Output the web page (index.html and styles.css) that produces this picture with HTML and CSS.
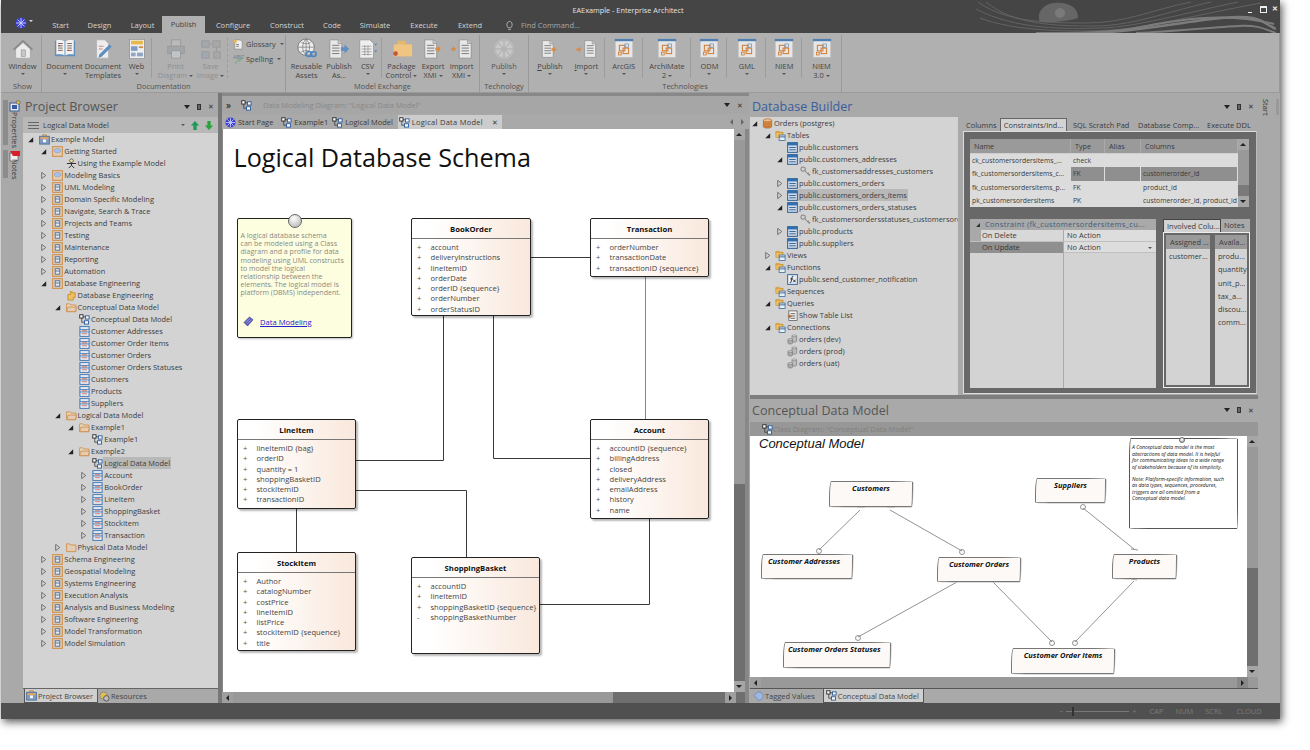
FILE: index.html
```html
<!DOCTYPE html>
<html lang="en">
<head>
<meta charset="utf-8">
<title>EAExample - Enterprise Architect</title>
<link rel="stylesheet" href="styles.css">
</head>
<body>
<svg class="defs" width="0" height="0" aria-hidden="true">
  <symbol id="op" viewBox="0 0 10 10"><path d="M3 1.5 7.5 5 3 8.5Z" fill="none" stroke="#666"/></symbol>
  <symbol id="dn" viewBox="0 0 10 10"><path d="M8 2.5V8H2.5Z" fill="#222"/></symbol>
  <symbol id="pkg" viewBox="0 0 12 12"><rect x=".7" y=".7" width="10.6" height="10.6" fill="#e2cdb4" stroke="#cf9150" stroke-width="1.2"/><rect x="3.5" y="3" width="5" height="6" fill="#e4e9f1" stroke="#4e6f9c"/><path d="M3.5 5.5h5" stroke="#4e6f9c"/></symbol>
  <symbol id="pkgo" viewBox="0 0 12 12"><rect x=".7" y=".7" width="10.6" height="10.6" fill="#e2cdb4" stroke="#cf9150" stroke-width="1.2"/><ellipse cx="6" cy="5" rx="3.6" ry="2.4" fill="#a9c1ea" stroke="#7c98c8" stroke-width=".6"/></symbol>
  <symbol id="model" viewBox="0 0 12 12"><path d="M4 2.5V1h4v1.5" fill="none" stroke="#b0803f"/><rect x=".7" y="2.5" width="10.6" height="8.5" fill="#7f9cc4" stroke="#4e6f9c"/><rect x="1.5" y="3.2" width="9" height="2.5" fill="#d9a566"/><rect x="4.5" y="6" width="3" height="3" fill="#fff"/></symbol>
  <symbol id="fold" viewBox="0 0 12 12"><path d="M.7 10.5V2h3.5l1 1.3h5.6v7.2Z" fill="#ead9c0" stroke="#cf9150"/><path d="M.7 10.5 2.3 5.5h9l-1 5Z" fill="#e2cdb4" stroke="#cf9150"/></symbol>
  <symbol id="foldc" viewBox="0 0 12 12"><path d="M.7 10.5V2h3.5l1 1.3h5.6v7.2Z" fill="#e2cdb4" stroke="#cf9150"/></symbol>
  <symbol id="foldg" viewBox="0 0 12 12"><path d="M2 11V5h3V3h5v5H8v3Z" fill="#f0c060" stroke="#c89030"/><rect x="4" y="1" width="3" height="2" fill="#e0a040"/></symbol>
  <symbol id="diag" viewBox="0 0 12 12"><path d="M3 3h5M3 3v6h3" fill="none" stroke="#333" stroke-width=".8"/><rect x=".8" y=".8" width="3.6" height="3.6" fill="#fff" stroke="#2a2a2a"/><rect x="7" y="2" width="4" height="3.5" fill="#fff" stroke="#2a5a9a"/><rect x="6" y="7.4" width="4.4" height="3.6" fill="#fff" stroke="#2a5a9a"/></symbol>
  <symbol id="cls" viewBox="0 0 12 12"><rect x="1" y=".7" width="10" height="10.6" fill="#f3f6fa" stroke="#3f77b5" stroke-width="1.1"/><path d="M1 3.7h10M1 6.5h10" stroke="#3f77b5"/><path d="M3 5.2h6M3 8.5h6" stroke="#c0392b" stroke-width=".8"/></symbol>
  <symbol id="dbt" viewBox="0 0 12 12"><rect x=".7" y=".7" width="10.6" height="10.6" fill="#cfdaea" stroke="#2f5f95" stroke-width="1.1"/><rect x=".7" y=".7" width="10.6" height="3" fill="#2f6fb0"/><path d="M2.5 6h7M2.5 8.5h7" stroke="#2f5f95"/></symbol>
  <symbol id="fn" viewBox="0 0 12 12"><rect x=".7" y=".7" width="10.6" height="10.6" fill="#e8eef6" stroke="#2f5f95"/><path d="M7 2.5C5.5 2 5.5 3.5 5 6S4.5 10 3 9.5M3.6 5.4h3M6.8 6.2 9.4 9M9.4 6.2 6.8 9" fill="none" stroke="#111" stroke-width=".9"/></symbol>
  <symbol id="key" viewBox="0 0 12 12"><circle cx="3.4" cy="3.4" r="2.4" fill="none" stroke="#888" stroke-width="1.1"/><path d="m5.2 5.2 5.3 5.3M8.4 8.4l1.4-1M9.8 9.8l1.2-1" stroke="#888" stroke-width="1.1" fill="none"/></symbol>
  <symbol id="cyl" viewBox="0 0 12 12"><path d="M1.5 2.5v7c0 2 9 2 9 0v-7Z" fill="#d98b45" stroke="#a85f25" stroke-width=".7"/><ellipse cx="6" cy="2.5" rx="4.5" ry="1.7" fill="#eebe8c" stroke="#a85f25" stroke-width=".7"/><path d="M1.5 5.5c0 1.6 9 1.6 9 0M1.5 8c0 1.6 9 1.6 9 0" fill="none" stroke="#a85f25" stroke-width=".6"/></symbol>
  <symbol id="cyls" viewBox="0 0 12 12"><path d="M5.5 2v6c0 1.2 5 1.2 5 0V2Z" fill="#bbb" stroke="#777" stroke-width=".7"/><ellipse cx="8" cy="2" rx="2.5" ry="1" fill="#ddd" stroke="#777" stroke-width=".6"/><path d="M1 6v4c0 1.2 5 1.2 5 0V6Z" fill="#aaa" stroke="#777" stroke-width=".7"/><ellipse cx="3.5" cy="6" rx="2.5" ry="1" fill="#ccc" stroke="#777" stroke-width=".6"/></symbol>
  <symbol id="qry" viewBox="0 0 12 12"><rect x="2" y="1" width="9" height="10.4" fill="#f4f4f4" stroke="#555" stroke-width=".8"/><path d="M4 4h5M4 6.5h5M4 9h5" stroke="#333" stroke-width=".8"/><path d="M1 7h4M3 5v4" stroke="#c06020" stroke-width="1.2"/></symbol>
  <symbol id="use" viewBox="0 0 12 12"><circle cx="6" cy="3" r="2" fill="#f0e6a0" stroke="#333" stroke-width=".7"/><path d="M1 6h10M6 5v3M6 8l-3 3M6 8l3 3" stroke="#222" fill="none"/></symbol>
  <symbol id="dbf" viewBox="0 0 12 12"><path d="M1 4V1.500h4l1 1h3V4" fill="#f0c060" stroke="#c89030" stroke-width=".7"/><rect x="1" y="3" width="7" height="5" fill="#f0c060" stroke="#c89030" stroke-width=".7"/><rect x="4.500" y="5.500" width="6.500" height="6" fill="#e8eef6" stroke="#2f5f95" stroke-width=".8"/><path d="M4.500 7.500h6.500" stroke="#2f5f95"/></symbol>
  <symbol id="r-tile" viewBox="0 0 24 24"><rect x="2.500" y="3" width="19" height="18" fill="#e6e6e6" stroke="#bdbdbd" stroke-width=".6"/><rect x="2" y="1" width="20" height="2.500" fill="#4f7eb0"/><rect x="7" y="8" width="6" height="6" fill="none" stroke="#d2823c" stroke-width="1.200"/><rect x="11" y="11" width="6" height="6" fill="none" stroke="#d2823c" stroke-width="1.200"/><rect x="13" y="6.500" width="4" height="3.500" fill="none" stroke="#6f8fb5" stroke-width=".8"/><rect x="6" y="15.500" width="3" height="3" fill="none" stroke="#d2823c"/></symbol>
  <symbol id="r-doc" viewBox="0 0 24 24"><path d="M5 2h9l4 4v16H5Z" fill="#e8e8e8" stroke="#888" stroke-width=".8"/><path d="M14 2v4h4" fill="#ccc" stroke="#888" stroke-width=".7"/><path d="M7.500 8h8M7.500 11h8M7.500 14h8M7.500 17h8" stroke="#666" stroke-width=".9"/></symbol>
  <symbol id="r-arrow" viewBox="0 0 24 24"><path d="M1 9.500h5V6l5 6-5 6v-3.500H1Z" fill="#d98a45"/></symbol>
</svg>

<div class="window">
  <header class="head">
    <svg class="swirl" viewBox="0 0 300 33" aria-hidden="true">
      <g fill="none" stroke="#6a6a6a" stroke-width=".8">
        <path d="M2 2C30 22 70 23 110 23S175 10 215 2"/><path d="M10 2C38 25 80 26 118 26S190 12 235 2"/><path d="M0 9C40 30 90 29 125 28S205 14 262 2"/><path d="M4 18C40 32 100 32 135 30S225 14 285 3"/>
      </g>
      <g fill="none" stroke="#7c7c7c">
        <path d="M60 33C110 33 140 32 165 27S245 10 298 24" stroke-width="2"/><path d="M120 33C165 31 205 22 245 18S285 22 300 29" stroke-width="2.400"/><path d="M160 33C200 31 240 27 262 26S288 29 300 33" stroke-width="2"/>
      </g>
      <path d="M64 22C60 12 68 4 78 3 92 1 103 8 102 18 92 21 78 23 64 22Z" fill="#666"/>
      <circle cx="84" cy="13" r="5" fill="#7a7a7a"/>
    </svg>
    <div class="titlerow">
      <span class="apptitle">EAExample - Enterprise Architect</span>
      <div class="winbtns">
        <span class="wmin"></span><span class="wmax"></span><span class="wx">✕</span>
      </div>
    </div>
    <nav class="tabrow">
      <svg class="logo" viewBox="0 0 12 12"><circle cx="6" cy="6" r="5.500" fill="#3a3fd0"/><path d="M6 1v10M1 6h10M2.500 2.500l7 7M9.500 2.500l-7 7" stroke="#cfd2ff" stroke-width=".9"/></svg>
      <i class="caret light"></i>
      <span class="rt t-start">Start</span>
      <span class="rt t-design">Design</span>
      <span class="rt t-layout">Layout</span>
      <span class="rt active t-publish">Publish</span>
      <span class="rt t-conf">Configure</span>
      <span class="rt t-cons">Construct</span>
      <span class="rt t-code">Code</span>
      <span class="rt t-sim">Simulate</span>
      <span class="rt t-exe">Execute</span>
      <span class="rt t-ext">Extend</span>
      <svg class="bulb" viewBox="0 0 10 12"><path d="M3.500 8.500C1 6 2 1.500 5 1.500S9 6 6.500 8.500ZM3.700 10.500h2.600" fill="none" stroke="#bbb"/></svg>
      <span class="find">Find Command...</span>
    </nav>
  </header>

  <section class="ribbon">
    <div class="rg g1">
      <div class="rbtns">
        <div class="rb w37"><svg class="ri" viewBox="0 0 24 24"><path d="M1 12 12 2l11 10-2 1.500L12 5 3 13.500Z" fill="#8a8a8a"/><path d="M4 12 12 5l8 7v10H4Z" fill="#ececec" stroke="#999" stroke-width=".6"/><rect x="10" y="13" width="4.500" height="7" fill="#c8c8c8" stroke="#888" stroke-width=".6"/></svg><span>Window</span><i class="caret"></i></div>
      </div>
      <div class="rl">Show</div>
    </div>
    <div class="rg g2">
      <div class="rbtns">
        <div class="rb w39 ml3"><svg class="ri" viewBox="0 0 24 24"><path d="M1 3h10.500l.5 1 .5-1H23v17H1Z" fill="#5f8fbe"/><path d="M2.500 2.500c3-.5 7-.5 9 1v15.500c-2-1.500-6-1.500-9-1ZM21.500 2.500c-3-.5-7-.5-9 1v15.500c2-1.500 6-1.500 9-1Z" fill="#f2f2f2"/><path d="M4.500 6h5M4.500 8.500h5M4.500 11h5M4.500 13.500h5M14.500 6h5M14.500 8.500h5M14.500 11h5M14.500 13.500h5" stroke="#7a5a50"/><path d="M4.500 8.500h2M14.500 13.500h2" stroke="#c0392b"/></svg><span>Document</span><i class="caret"></i></div>
        <div class="rb w38"><svg class="ri" viewBox="0 0 24 24"><path d="M5 2h9l4 4v16H5Z" fill="#ededed" stroke="#aaa" stroke-width=".7"/><path d="M7.500 9h5M7.500 12h4" stroke="#c77" /><path d="M8 18 19 7l2.500 2.500-11 11-3.500 1Z" fill="#5f8fbe"/></svg><span>Document<br>Templates</span></div>
        <div class="rb w30 sepr"><svg class="ri" viewBox="0 0 24 24"><rect x="4" y="1.500" width="16" height="21" fill="#eee" stroke="#888" stroke-width=".7"/><rect x="5.500" y="3" width="13" height="4" fill="#e8b84a"/><rect x="5.500" y="9" width="7" height="5" fill="#7f9cc4"/><rect x="14" y="9" width="4.500" height="2" fill="#d98a45"/><rect x="5.500" y="16" width="5" height="4" fill="#8da6c8"/><rect x="12" y="16" width="6.500" height="4" fill="#8da6c8"/></svg><span>Web</span><i class="caret"></i></div>
        <div class="rb w37 ml5 dis"><svg class="ri" viewBox="0 0 24 24"><rect x="7" y="2" width="10" height="7" fill="#bbb" stroke="#9a9a9a"/><rect x="3" y="9" width="18" height="8" fill="#a5a5a5" stroke="#999"/><rect x="7" y="14" width="10" height="8" fill="#c0c5cc" stroke="#999"/></svg><span>Print<br>Diagram<i class="caret"></i></span></div>
        <div class="rb w34 sepr dis"><svg class="ri" viewBox="0 0 24 24"><rect x="2" y="3" width="8" height="7" fill="#a2a8b0" stroke="#999"/><rect x="14" y="3" width="8" height="7" fill="#a8a8a8" stroke="#999"/><rect x="2" y="15" width="8" height="7" fill="#a2a8b0" stroke="#999"/><rect x="15" y="15" width="7" height="7" fill="#a8a8a8" stroke="#999"/><path d="M10 6.500h4M18 10v5" stroke="#999"/></svg><span>Save<br>Image<i class="caret"></i></span></div>
        <div class="rstack">
          <div class="rs"><svg class="si" viewBox="0 0 12 12"><path d="M2 1h6l2 2v8H2Z" fill="#eee" stroke="#888" stroke-width=".7"/><path d="M3.500 6h3M3.500 8h3" stroke="#777"/><rect x="1" y="1" width="3" height="3" fill="#e8b84a"/></svg><span>Glossary</span><i class="caret"></i></div>
          <div class="rs"><svg class="si wide" viewBox="0 0 12 12"><path d="M1 11 5 6l1 2 5-7" fill="none" stroke="#6aa86a"/></svg><span class="abc">ABC</span><span>Spelling</span><i class="caret"></i></div>
        </div>
      </div>
      <div class="rl">Documentation</div>
    </div>
    <div class="rg g3">
      <div class="rbtns">
        <div class="rb w35 ml3"><svg class="ri" viewBox="0 0 24 24"><circle cx="11" cy="10" r="9" fill="#eee" stroke="#777"/><path d="M2 10h18M11 1v18M5 4c3 3 9 3 12 0M5 16c3-3 9-3 12 0M11 1c-5 5-5 13 0 18M11 1c5 5 5 13 0 18" fill="none" stroke="#777" stroke-width=".8"/><rect x="11" y="15" width="6" height="5" rx="2.500" fill="none" stroke="#4f86bd" stroke-width="1.800"/><rect x="16" y="15" width="6" height="5" rx="2.500" fill="none" stroke="#4f86bd" stroke-width="1.800"/></svg><span>Reusable<br>Assets</span></div>
        <div class="rb w30"><svg class="ri" viewBox="0 0 24 24"><use href="#r-doc" x="-3" width="24" height="24"/><path d="M14 10h4V7l5 5-5 5v-3h-4Z" fill="#5f8fbe"/></svg><span>Publish<br>As...</span></div>
        <div class="rb w27 sepr"><svg class="ri" viewBox="0 0 24 24"><path d="M3 2h11l4 4v16H3Z" fill="#eee" stroke="#888" stroke-width=".7"/><path d="M5 9h11M5 12h11M5 15h11M5 18h11M8.500 8v11M12 8v11" stroke="#777" stroke-width=".6"/><path d="M19 6h3l-1.500 3ZM19 13h3l-1.500 3Z" fill="#5f8fbe"/></svg><span>CSV</span><i class="caret"></i></div>
        <div class="rb w35 ml2"><svg class="ri" viewBox="0 0 24 24"><path d="M7 3h9v4h7v13H7Z" fill="#e8b86a"/><rect x="3" y="7" width="20" height="13" fill="#efc581"/><circle cx="5" cy="17" r="2.500" fill="#c0563b"/></svg><span>Package<br>Control<i class="caret"></i></span></div>
        <div class="rb w28"><svg class="ri" viewBox="0 0 24 24"><use href="#r-doc" width="24" height="24" x="-2"/><use href="#r-arrow" width="14" height="14" x="14" y="5"/></svg><span>Export<br>XMI<i class="caret"></i></span></div>
        <div class="rb w29"><svg class="ri" viewBox="0 0 24 24"><use href="#r-arrow" width="14" height="14" x="-1" y="5"/><use href="#r-doc" width="24" height="24" x="4"/></svg><span>Import<br>XMI<i class="caret"></i></span></div>
      </div>
      <div class="rl">Model Exchange</div>
    </div>
    <div class="rg g4">
      <div class="rbtns">
        <div class="rb w49 dim"><svg class="ri" viewBox="0 0 24 24"><circle cx="12" cy="12" r="10" fill="#c8c8c8" stroke="#bbb" stroke-width="2"/><path d="M12 2v20M2 12h20M5 5l14 14M19 5 5 19" stroke="#aaa"/><circle cx="12" cy="12" r="3" fill="#b4b4b4"/></svg><span>Publish</span><i class="caret"></i></div>
      </div>
      <div class="rl">Technology</div>
    </div>
    <div class="rg g5">
      <div class="rbtns">
        <div class="rb w36 ml3"><svg class="ri" viewBox="0 0 24 24"><use href="#r-doc" width="22" height="22" x="-1" y="1"/><use href="#r-arrow" width="13" height="13" x="13" y="6"/></svg><span><u>P</u>ublish</span><i class="caret"></i></div>
        <div class="rb w37 sepr"><svg class="ri" viewBox="0 0 24 24"><use href="#r-arrow" width="13" height="13" x="1" y="6"/><use href="#r-doc" width="22" height="22" x="6" y="1"/></svg><span><u>I</u>mport</span><i class="caret"></i></div>
        <div class="rb w38 sepr"><svg class="ri"><use href="#r-tile"/></svg><span>ArcGIS</span><i class="caret"></i></div>
        <div class="rb w49 sepr"><svg class="ri"><use href="#r-tile"/></svg><span>ArchiMate<br>2<i class="caret"></i></span></div>
        <div class="rb w36 sepr"><svg class="ri"><use href="#r-tile"/></svg><span>ODM</span><i class="caret"></i></div>
        <div class="rb w39 sepr"><svg class="ri"><use href="#r-tile"/></svg><span>GML</span><i class="caret"></i></div>
        <div class="rb w36 sepr"><svg class="ri"><use href="#r-tile"/></svg><span>NIEM</span><i class="caret"></i></div>
        <div class="rb w39"><svg class="ri"><use href="#r-tile"/></svg><span>NIEM<br>3.0<i class="caret"></i></span></div>
      </div>
      <div class="rl">Technologies</div>
    </div>
  </section>

  <main class="work">
    <aside class="lstrip">
      <div class="vtab vt-props"><svg class="vi" viewBox="0 0 12 12"><rect x="1" y="3" width="9" height="8" fill="#e6e6e6" stroke="#3a5a9a"/><rect x="3" y="5" width="5" height="4" fill="#3a5aa0"/><path d="M7 1h4v3H8Z" fill="#e8c04a" stroke="#555" stroke-width=".5"/></svg><span>Properties</span></div>
      <div class="vtab vt-notes"><svg class="vi" viewBox="0 0 12 12"><rect x="1" y="3" width="8" height="8" fill="#eee" stroke="#555" stroke-width=".7"/><path d="M1 1h10v5H4Z" fill="#d8202a"/></svg><span>Notes</span></div>
    </aside>

    <section class="pb">
      <div class="ptitle"><h2>Project Browser</h2><div class="pctl"><i class="tri"></i><span class="pin"></span><span class="cx">✕</span></div></div>
      <div class="pbbar">
        <span class="burger"></span><span class="pbname">Logical Data Model</span>
        <i class="caret dark"></i>
        <svg class="arr" viewBox="0 0 12 12"><path d="M6 .5 11 6H8v5.500H4V6H1Z" fill="#1e9a58"/></svg>
        <svg class="arr" viewBox="0 0 12 12"><path d="M6 11.500 11 6H8V.5H4V6H1Z" fill="#2aa23c"/></svg>
      </div>
      <div class="tree ptree">
        <div class="row l0"><svg class="ar"><use href="#dn"/></svg><svg class="ti"><use href="#model"/></svg><span>Example Model</span></div>
        <div class="row l1"><svg class="ar"><use href="#dn"/></svg><svg class="ti"><use href="#pkgo"/></svg><span>Getting Started</span></div>
        <div class="row l2"><i class="ar"></i><svg class="ti"><use href="#use"/></svg><span>Using the Example Model</span></div>
        <div class="row l1"><svg class="ar"><use href="#op"/></svg><svg class="ti"><use href="#pkgo"/></svg><span>Modeling Basics</span></div>
        <div class="row l1"><svg class="ar"><use href="#op"/></svg><svg class="ti"><use href="#pkg"/></svg><span>UML Modeling</span></div>
        <div class="row l1"><svg class="ar"><use href="#op"/></svg><svg class="ti"><use href="#pkg"/></svg><span>Domain Specific Modeling</span></div>
        <div class="row l1"><svg class="ar"><use href="#op"/></svg><svg class="ti"><use href="#pkg"/></svg><span>Navigate, Search &amp; Trace</span></div>
        <div class="row l1"><svg class="ar"><use href="#op"/></svg><svg class="ti"><use href="#pkg"/></svg><span>Projects and Teams</span></div>
        <div class="row l1"><svg class="ar"><use href="#op"/></svg><svg class="ti"><use href="#pkg"/></svg><span>Testing</span></div>
        <div class="row l1"><svg class="ar"><use href="#op"/></svg><svg class="ti"><use href="#pkg"/></svg><span>Maintenance</span></div>
        <div class="row l1"><svg class="ar"><use href="#op"/></svg><svg class="ti"><use href="#pkg"/></svg><span>Reporting</span></div>
        <div class="row l1"><svg class="ar"><use href="#op"/></svg><svg class="ti"><use href="#pkg"/></svg><span>Automation</span></div>
        <div class="row l1"><svg class="ar"><use href="#dn"/></svg><svg class="ti"><use href="#pkg"/></svg><span>Database Engineering</span></div>
        <div class="row l2"><i class="ar"></i><svg class="ti"><use href="#foldg"/></svg><span>Database Engineering</span></div>
        <div class="row l2"><svg class="ar"><use href="#dn"/></svg><svg class="ti"><use href="#fold"/></svg><span>Conceptual Data Model</span></div>
        <div class="row l3"><i class="ar"></i><svg class="ti"><use href="#diag"/></svg><span>Conceptual Data Model</span></div>
        <div class="row l3"><i class="ar"></i><svg class="ti"><use href="#cls"/></svg><span>Customer Addresses</span></div>
        <div class="row l3"><i class="ar"></i><svg class="ti"><use href="#cls"/></svg><span>Customer Order Items</span></div>
        <div class="row l3"><i class="ar"></i><svg class="ti"><use href="#cls"/></svg><span>Customer Orders</span></div>
        <div class="row l3"><i class="ar"></i><svg class="ti"><use href="#cls"/></svg><span>Customer Orders Statuses</span></div>
        <div class="row l3"><i class="ar"></i><svg class="ti"><use href="#cls"/></svg><span>Customers</span></div>
        <div class="row l3"><i class="ar"></i><svg class="ti"><use href="#cls"/></svg><span>Products</span></div>
        <div class="row l3"><i class="ar"></i><svg class="ti"><use href="#cls"/></svg><span>Suppliers</span></div>
        <div class="row l2"><svg class="ar"><use href="#dn"/></svg><svg class="ti"><use href="#fold"/></svg><span>Logical Data Model</span></div>
        <div class="row l3"><svg class="ar"><use href="#dn"/></svg><svg class="ti"><use href="#fold"/></svg><span>Example1</span></div>
        <div class="row l4"><i class="ar"></i><svg class="ti"><use href="#diag"/></svg><span>Example1</span></div>
        <div class="row l3"><svg class="ar"><use href="#dn"/></svg><svg class="ti"><use href="#fold"/></svg><span>Example2</span></div>
        <div class="row l4"><i class="ar"></i><svg class="ti"><use href="#diag"/></svg><span class="sel">Logical Data Model</span></div>
        <div class="row l4"><svg class="ar"><use href="#op"/></svg><svg class="ti"><use href="#cls"/></svg><span>Account</span></div>
        <div class="row l4"><svg class="ar"><use href="#op"/></svg><svg class="ti"><use href="#cls"/></svg><span>BookOrder</span></div>
        <div class="row l4"><svg class="ar"><use href="#op"/></svg><svg class="ti"><use href="#cls"/></svg><span>LineItem</span></div>
        <div class="row l4"><svg class="ar"><use href="#op"/></svg><svg class="ti"><use href="#cls"/></svg><span>ShoppingBasket</span></div>
        <div class="row l4"><svg class="ar"><use href="#op"/></svg><svg class="ti"><use href="#cls"/></svg><span>StockItem</span></div>
        <div class="row l4"><svg class="ar"><use href="#op"/></svg><svg class="ti"><use href="#cls"/></svg><span>Transaction</span></div>
        <div class="row l2"><svg class="ar"><use href="#op"/></svg><svg class="ti"><use href="#foldc"/></svg><span>Physical Data Model</span></div>
        <div class="row l1"><svg class="ar"><use href="#op"/></svg><svg class="ti"><use href="#pkg"/></svg><span>Schema Engineering</span></div>
        <div class="row l1"><svg class="ar"><use href="#op"/></svg><svg class="ti"><use href="#pkg"/></svg><span>Geospatial Modeling</span></div>
        <div class="row l1"><svg class="ar"><use href="#op"/></svg><svg class="ti"><use href="#pkg"/></svg><span>Systems Engineering</span></div>
        <div class="row l1"><svg class="ar"><use href="#op"/></svg><svg class="ti"><use href="#pkg"/></svg><span>Execution Analysis</span></div>
        <div class="row l1"><svg class="ar"><use href="#op"/></svg><svg class="ti"><use href="#pkg"/></svg><span>Analysis and Business Modeling</span></div>
        <div class="row l1"><svg class="ar"><use href="#op"/></svg><svg class="ti"><use href="#pkg"/></svg><span>Software Engineering</span></div>
        <div class="row l1"><svg class="ar"><use href="#op"/></svg><svg class="ti"><use href="#pkg"/></svg><span>Model Transformation</span></div>
        <div class="row l1"><svg class="ar"><use href="#op"/></svg><svg class="ti"><use href="#pkg"/></svg><span>Model Simulation</span></div>
      </div>
      <div class="btabs pbtabs">
        <span class="btab on"><svg class="ti"><use href="#model"/></svg>Project Browser</span>
        <span class="btab"><svg class="ti" viewBox="0 0 12 12"><circle cx="5" cy="5" r="4" fill="#e8c04a" stroke="#888"/><circle cx="8" cy="8" r="3" fill="#bbb" stroke="#555"/></svg>Resources</span>
      </div>
    </section>

    <div class="vsplit"></div>

    <section class="center">
      <div class="crumb">
        <span class="chev">»</span><svg class="ti"><use href="#diag"/></svg>
        <span class="crumbtext">Data Modeling Diagram: "Logical Data Model"</span>
        <div class="pctl"><i class="tri"></i><span class="cx">✕</span></div>
      </div>
      <div class="dtabs">
        <span class="dtab first"><svg class="ti" viewBox="0 0 12 12"><circle cx="6" cy="6" r="5.500" fill="#3a3fd0"/><path d="M6 1v10M1 6h10M2.500 2.500l7 7M9.500 2.500l-7 7" stroke="#cfd2ff" stroke-width=".9"/></svg>Start Page</span>
        <span class="dtab second"><svg class="ti"><use href="#diag"/></svg>Example1</span>
        <span class="dtab"><svg class="ti"><use href="#diag"/></svg>Logical Model</span>
        <span class="dtab on"><svg class="ti"><use href="#diag"/></svg>Logical Data Model<b class="tabx">✕</b></span>
        <span class="tabnav"><i class="tl"></i><i class="tr"></i></span>
      </div>
      <div class="cbody">
        <div class="canvas">
          <h1 class="dtitle">Logical Database Schema</h1>
          <svg class="wires" width="511" height="563" aria-hidden="true">
            <path d="M220.500 187V331.500H133M270.500 187V329.500H367M308 128.500H367M73.500 380V423M133 361.500H243.500V428M317 475.500H426.500V390" fill="none" stroke="#3a3a3a"/>
            <path d="M422.500 148V290" fill="none" stroke="#888"/>
          </svg>
          <div class="note n-note">
            <span class="pinball"></span>
            <p>A logical database schema<br>can be modeled using a Class<br>diagram and a profile for data<br>modeling using UML constructs<br>to model the logical<br>relationship between the<br>elements. The logical model is<br>platform (DBMS) independent.</p>
            <div class="notelink"><svg class="ti" viewBox="0 0 12 12"><path d="M1 7 7 1l4 3-6 7Z" fill="#5a5ab8" stroke="#33338a" stroke-width=".6"/><path d="M3 7 8 2.500M4.500 8.500l5-4.500" stroke="#cfd0ff" stroke-width=".6"/></svg><a>Data Modeling</a></div>
          </div>
          <div class="ent n-book"><h3>BookOrder</h3><ul><li>account</li><li>deliveryInstructions</li><li>lineItemID</li><li>orderDate</li><li>orderID {sequence}</li><li>orderNumber</li><li>orderStatusID</li></ul></div>
          <div class="ent n-trans"><h3>Transaction</h3><ul><li>orderNumber</li><li>transactionDate</li><li>transactionID {sequence}</li></ul></div>
          <div class="ent n-line"><h3>LineItem</h3><ul><li>lineItemID {bag}</li><li>orderID</li><li>quantity = 1</li><li>shoppingBasketID</li><li>stockItemID</li><li>transactionID</li></ul></div>
          <div class="ent n-acct"><h3>Account</h3><ul><li>accountID {sequence}</li><li>billingAddress</li><li>closed</li><li>deliveryAddress</li><li>emailAddress</li><li>history</li><li>name</li></ul></div>
          <div class="ent n-stock"><h3>StockItem</h3><ul><li>Author</li><li>catalogNumber</li><li>costPrice</li><li>lineItemID</li><li>listPrice</li><li>stockItemID {sequence}</li><li>title</li></ul></div>
          <div class="ent n-basket"><h3>ShoppingBasket</h3><ul><li>accountID</li><li>lineItemID</li><li>shoppingBasketID {sequence}</li><li class="minus">shoppingBasketNumber</li></ul></div>
        </div>
        <div class="vscroll vs-c"><i class="up"></i><b class="thumb"></b><i class="down"></i></div>
      </div>
      <div class="hscroll hs-c"><i class="lf"></i><b class="hthumb"></b><i class="rg-a"></i></div>
    </section>

    <section class="rightcol">
      <div class="dbb">
        <div class="ptitle blue"><h2>Database Builder</h2><div class="pctl"><i class="tri"></i><span class="pin"></span><span class="cx">✕</span></div></div>
        <div class="dbbody">
          <div class="tree dbtree">
            <div class="row d0"><svg class="ar"><use href="#dn"/></svg><svg class="ti"><use href="#cyl"/></svg><span>Orders (postgres)</span></div>
            <div class="row d1"><svg class="ar"><use href="#dn"/></svg><svg class="ti"><use href="#dbf"/></svg><span>Tables</span></div>
            <div class="row d2"><i class="ar"></i><svg class="ti"><use href="#dbt"/></svg><span>public.customers</span></div>
            <div class="row d2"><svg class="ar"><use href="#dn"/></svg><svg class="ti"><use href="#dbt"/></svg><span>public.customers_addresses</span></div>
            <div class="row d3"><i class="ar"></i><svg class="ti"><use href="#key"/></svg><span>fk_customersaddresses_customers</span></div>
            <div class="row d2"><svg class="ar"><use href="#op"/></svg><svg class="ti"><use href="#dbt"/></svg><span>public.customers_orders</span></div>
            <div class="row d2"><svg class="ar"><use href="#op"/></svg><svg class="ti"><use href="#dbt"/></svg><span class="sel">public.customers_orders_items</span></div>
            <div class="row d2"><svg class="ar"><use href="#dn"/></svg><svg class="ti"><use href="#dbt"/></svg><span>public.customers_orders_statuses</span></div>
            <div class="row d3"><i class="ar"></i><svg class="ti"><use href="#key"/></svg><span>fk_customersordersstatuses_customersorders</span></div>
            <div class="row d2"><svg class="ar"><use href="#op"/></svg><svg class="ti"><use href="#dbt"/></svg><span>public.products</span></div>
            <div class="row d2"><i class="ar"></i><svg class="ti"><use href="#dbt"/></svg><span>public.suppliers</span></div>
            <div class="row d1"><svg class="ar"><use href="#op"/></svg><svg class="ti"><use href="#dbf"/></svg><span>Views</span></div>
            <div class="row d1"><svg class="ar"><use href="#dn"/></svg><svg class="ti"><use href="#dbf"/></svg><span>Functions</span></div>
            <div class="row d2"><i class="ar"></i><svg class="ti"><use href="#fn"/></svg><span>public.send_customer_notification</span></div>
            <div class="row d1"><i class="ar"></i><svg class="ti"><use href="#dbf"/></svg><span>Sequences</span></div>
            <div class="row d1"><svg class="ar"><use href="#dn"/></svg><svg class="ti"><use href="#dbf"/></svg><span>Queries</span></div>
            <div class="row d2"><i class="ar"></i><svg class="ti"><use href="#qry"/></svg><span>Show Table List</span></div>
            <div class="row d1"><svg class="ar"><use href="#dn"/></svg><svg class="ti"><use href="#dbf"/></svg><span>Connections</span></div>
            <div class="row d2"><i class="ar"></i><svg class="ti"><use href="#cyls"/></svg><span>orders (dev)</span></div>
            <div class="row d2"><i class="ar"></i><svg class="ti"><use href="#cyls"/></svg><span>orders (prod)</span></div>
            <div class="row d2"><i class="ar"></i><svg class="ti"><use href="#cyls"/></svg><span>orders (uat)</span></div>
          </div>
          <div class="grip"></div>
          <div class="dbright">
            <div class="dbtabs">
              <span class="dbt t1">Columns</span><span class="dbt on t2">Constraints/Ind...</span><span class="dbt t3">SQL Scratch Pad</span><span class="dbt t4">Database Comp...</span><span class="dbt t5">Execute DDL</span>
            </div>
            <div class="dbdark">
              <div class="cgrid">
                <div class="cmain">
                  <div class="cr head"><span>Name</span><span>Type</span><span>Alias</span><span>Columns</span></div>
                  <div class="cr"><span>ck_customersordersitems_...</span><span>check</span><span></span><span></span></div>
                  <div class="cr sel"><span>fk_customersordersitems_c...</span><span>FK</span><span></span><span>customerorder_id</span></div>
                  <div class="cr"><span>fk_customersordersitems_p...</span><span>FK</span><span></span><span>product_id</span></div>
                  <div class="cr"><span>pk_customersordersitems</span><span>PK</span><span></span><span>customerorder_id, product_id</span></div>
                </div>
                <div class="vscroll vs-g"><i class="up"></i><b class="thumb"></b><i class="down"></i></div>
              </div>
              <div class="clower">
                <div class="props">
                  <div class="phead"><i class="mini"></i>Constraint (fk_customersordersitems_cu...</div>
                  <div class="prow"><span>On Delete</span><span>No Action</span></div>
                  <div class="prow on"><span>On Update</span><span>No Action<i class="caret dark"></i></span></div>
                  <div class="pfill"><span></span><span></span></div>
                </div>
                <div class="inv">
                  <div class="invtabs"><span class="on">Involved Colu...</span><span>Notes</span></div>
                  <div class="invbox">
                    <div class="invcol c-a"><h4>Assigned ...</h4><p>customer...</p></div>
                    <div class="invgrip"></div>
                    <div class="invcol c-b"><h4>Availa...</h4><p>produ...</p><p>quantity</p><p>unit_p...</p><p>tax_a...</p><p>discou...</p><p>comm...</p></div>
                  </div>
                </div>
              </div>
            </div>
          </div>
        </div>
      </div>
      <div class="hsplit"></div>
      <div class="cdm">
        <div class="ptitle"><h2>Conceptual Data Model</h2><div class="pctl"><i class="tri"></i><span class="pin"></span><span class="cx">✕</span></div></div>
        <div class="cdmcrumb"><svg class="ti"><use href="#diag"/></svg><span>Class Diagram: "Conceptual Data Model"</span></div>
        <div class="cbody2">
          <div class="canvas2">
            <h2 class="c2title">Conceptual Model</h2>
            <svg class="wires" width="498" height="241" aria-hidden="true">
              <g fill="none" stroke="#777" stroke-width=".8">
                <path d="M110 74 69 114M140 74 212 115M207 146 108 201M243 146 302 206M384 145 325 206M333 72 384 113"/>
                <path d="M107 71h8M137 71h8M204 143h8M240 143h8M381 143l6 1M381 113l7 1"/>
                <circle cx="69" cy="115" r="2.500"/><circle cx="212" cy="116" r="2.500"/><circle cx="108" cy="202" r="2.500"/><circle cx="302" cy="207" r="2.500"/><circle cx="325" cy="207" r="2.500"/><circle cx="333" cy="71" r="2.500"/>
              </g>
            </svg>
            <div class="hbox b-cust">Customers</div>
            <div class="hbox b-addr">Customer Addresses</div>
            <div class="hbox b-ord">Customer Orders</div>
            <div class="hbox b-stat">Customer Orders Statuses</div>
            <div class="hbox b-items">Customer Order Items</div>
            <div class="hbox b-sup">Suppliers</div>
            <div class="hbox b-prod">Products</div>
            <div class="hnote"><span class="pinball small"></span><p>A Conceptual data model is the most<br>abstractions of data model. It is helpful<br>for communicating ideas to a wide range<br>of stakeholders because of its simplicity.</p><p>Note: Platform-specific information, such<br>as data types, sequences, procedures,<br>triggers are all omitted from a<br>Conceptual data model.</p></div>
          </div>
          <div class="vscroll vs-l"><i class="up"></i><b class="thumb"></b><i class="down"></i></div>
        </div>
        <div class="hscroll hs-l"><i class="lf"></i><b class="hthumb"></b><i class="rg-a"></i></div>
        <div class="btabs cdmtabs">
          <span class="btab"><svg class="ti" viewBox="0 0 12 12"><path d="M1 5 5 1h3l3 3v3l-4 4Z" fill="#9db7e0" stroke="#5a7ab0" stroke-width=".7"/></svg>Tagged Values</span>
          <span class="btab on"><svg class="ti"><use href="#diag"/></svg>Conceptual Data Model</span>
        </div>
      </div>
    </section>

    <aside class="rstrip"><span class="starttab">Start</span></aside>
  </main>

  <footer class="status">
    <span class="zoomm">−</span><span class="slider"><b></b></span><span class="zoomp">+</span>
    <span class="st s1">CAP</span><span class="st s2">NUM</span><span class="st s3">SCRL</span><span class="st s4">CLOUD</span>
  </footer>
</div>
</body>
</html>
```

FILE: styles.css
```css
* { box-sizing: border-box; }
html, body { margin: 0; padding: 0; background: #fff; }
body { font-family: "Open Sans", "Noto Sans", sans-serif; font-size: 7.45px; color: #3a3a3a; overflow: hidden; width: 1310px; height: 750px; }
.defs { position: absolute; }
.window { width: 1279px; height: 719px; margin-left: 1px; display: flex; flex-direction: column; background: #a9a9a9; box-shadow: 2px 3px 8px rgba(0,0,0,.65); overflow: hidden; }

/* header */
.head { position: relative; height: 33px; background: #454545; color: #d8d8d8; flex: none; }
.swirl { position: absolute; right: 4px; top: 0; width: 300px; height: 33px; }
.titlerow { position: relative; height: 17px; display: flex; align-items: center; justify-content: center; padding-right: 25px; }
.apptitle { font-size: 7.3px; color: #e4e4e4; position: relative; top: 1px; }
.winbtns { position: absolute; right: 2px; top: 4px; display: flex; align-items: center; gap: 5px; height: 10px; }
.wmin { width: 4px; height: 1.5px; background: #eee; margin-top: 7px; margin-right: 3px; }
.wmax { width: 7px; height: 7px; border: 1px solid #eee; border-top-width: 2px; }
.wx { font-size: 7px; color: #eee; font-weight: 700; line-height: 10px; }
.tabrow { position: relative; height: 16px; display: flex; align-items: center; padding-left: 14px; }
.logo { width: 12px; height: 12px; margin-top: -5px; }
.caret { display: inline-block; width: 0; height: 0; border: 2px solid transparent; border-top: 2.5px solid #555; border-bottom: 0; vertical-align: middle; margin-left: 2px; }
.caret.light { border-top-color: #ddd; margin-top: -8px; }
.rt { display: block; font-size: 7.5px; text-align: center; line-height: 16px; color: #d4d4d4; }
.t-start { margin-left: 12px; width: 31px; } .t-design { width: 47px; } .t-layout { width: 39px; }
.rt.active { width: 43px; margin-left: 0; background: #b0b0b0; color: #444; height: 17px; margin-top: -1px; }
.t-conf { width: 56px; } .t-cons { width: 52px; } .t-code { width: 38px; } .t-sim { width: 48px; } .t-exe { width: 50px; } .t-ext { width: 42px; }
.bulb { width: 9px; height: 11px; margin-left: 14px; }
.find { margin-left: 7px; color: #a8a8a8; }

/* ribbon */
.ribbon { flex: none; height: 60px; background: #b0b0b0; display: flex; padding-left: 3px; border-bottom: 1px solid #9a9a9a; border-right: 1px solid #999; }
.rg { display: flex; flex-direction: column; border-right: 1px solid #999; margin-top: 2px; }
.g1 { width: 38px; } .g2 { width: 244px; } .g3 { width: 194px; } .g4 { width: 49px; } .g5 { width: 313px; }
.rbtns { display: flex; height: 46px; }
.rb { display: block; text-align: center; line-height: 9px; color: #444; padding-top: 3px; }
.rb span { display: block; }
.ri { display: block; width: 22px; height: 22px; margin: 0 auto 2px; }
.rb .caret { display: block; margin: 2px auto 0; }
.rb span .caret { display: inline-block; margin: 0 0 0 2px; }
.w27 { width: 28px; } .w28 { width: 28px; } .w29 { width: 29px; } .w30 { width: 30px; } .w34 { width: 34px; } .w35 { width: 35px; } .w36 { width: 36px; } .w37 { width: 37px; } .w38 { width: 38px; } .w39 { width: 39px; } .w40 { width: 40px; } .w49 { width: 49px; }
.ml2 { margin-left: 2px; } .ml3 { margin-left: 3px; } .ml4 { margin-left: 4px; } .ml5 { margin-left: 5px; }
.sepr { border-right: 1px solid #9c9c9c; height: 40px; margin-top: 3px; padding-top: 0; }
.g5 .sepr { padding-left: 1px; }
.dis { color: #8e8e8e; }
.dis.sepr { border-right: 1px dashed #9c9c9c; }
.dim { color: #555; }
.rstack { margin-left: 5px; padding-top: 3px; display: flex; flex-direction: column; gap: 3px; }
.rs { display: flex; align-items: center; height: 12px; color: #444; gap: 2px; position: relative; }
.si { width: 11px; height: 11px; }
.si.wide { position: absolute; left: 1px; top: 1px; }
.abc { font-size: 6px; color: #6a7f9a; width: 11px; position: relative; top: -2px; letter-spacing: -.4px; }
.rl { height: 11px; line-height: 11px; text-align: center; color: #505050; margin-top: 0; }

/* workspace */
.work { flex: 1; min-height: 0; display: flex; background: #a9a9a9; }
.lstrip { width: 22px; flex: none; background: #a9a9a9; padding: 7px 0 0 2px; display: flex; flex-direction: column; gap: 5px; }
.vtab { width: 5px; background: #8c8c8c; position: relative; }
.vt-props { height: 45px; } .vt-notes { height: 28px; }
.vi { position: absolute; left: 6px; top: 0; width: 12px; height: 12px; }
.vtab span { position: absolute; left: 7px; top: 12px; writing-mode: vertical-rl; color: #333; font-size: 7.45px; line-height: 10px; }
.vt-notes span { top: 9px; }

.pb { width: 195px; flex: none; display: flex; flex-direction: column; }
.ptitle { height: 24px; flex: none; display: flex; align-items: center; justify-content: space-between; padding: 3px 4px 0 2px; }
.ptitle h2 { margin: 0; font-size: 12.55px; font-weight: 400; color: #555; line-height: 15px; }
.ptitle.blue h2 { color: #3a5e9e; }
.pctl { display: flex; align-items: center; gap: 7px; color: #333; }
.tri { width: 0; height: 0; border: 3px solid transparent; border-top: 4px solid #222; border-bottom: 0; }
.pin { width: 4px; height: 6px; background: #666; border: 1px solid #333; }
.cx { font-size: 7px; line-height: 9px; color: #333; }
.pbbar { height: 16px; flex: none; background: #b8b8b8; display: flex; align-items: center; padding-left: 5px; }
.burger { width: 11px; height: 7px; border-top: 1px solid #666; border-bottom: 1px solid #666; position: relative; }
.burger::after { content: ""; position: absolute; left: 0; right: 0; top: 2px; height: 1px; background: #666; }
.pbname { margin-left: 4px; flex: 1; }
.arr { width: 10px; height: 11px; margin-right: 4px; }
.pbbar .caret { margin-right: 5px; }
.tree { background: #d3d3d3; overflow: hidden; }
.ptree { flex: 1; padding-top: 0; }
.row { height: 12px; display: flex; align-items: center; white-space: nowrap; color: #3c3c3c; }
.ar { width: 9px; height: 9px; display: block; flex: none; margin-right: 4px; }
.ti { width: 11px; height: 11px; flex: none; display: block; margin-right: 1px; }
.row span { padding: 0 1px; margin-left: -1px; line-height: 12px; }
.row .sel { background: #b8b8b8; }
.l0 { padding-left: 3px; } .l1 { padding-left: 16.3px; } .l2 { padding-left: 29.6px; } .l3 { padding-left: 43px; } .l4 { padding-left: 56.3px; }
.btabs { height: 15px; flex: none; display: flex; background: #a9a9a9; border-top: 1px solid #666; padding-left: 1px; }
.btab { display: flex; align-items: center; gap: 1px; padding: 0 4px 0 1px; height: 14px; color: #444; }
.btab .ti { margin-right: 0; }
.btab.on { background: #cfcfcf; border: 1px solid #555; border-top: 0; }

.vsplit { width: 4px; flex: none; background: #777; }
.center { width: 527px; flex: none; display: flex; flex-direction: column; background: #888; padding-top: 2px; }
.crumb { height: 19px; flex: none; display: flex; align-items: center; padding: 0 6px 0 4px; background: #a6a6a6; border-top: 1px solid #888; }
.chev { font-size: 10px; color: #111; width: 15px; line-height: 10px; }
.crumbtext { margin-left: 10px; color: #888; flex: 1; }
.dtabs { height: 15px; flex: none; display: flex; align-items: flex-end; background: #a9a9a9; padding-left: 2px; position: relative; }
.dtab { display: flex; align-items: center; gap: 1px; height: 14px; padding: 0 3px 0 1px; color: #3a3a3a; margin-right: 1px; }
.dtab.first { margin-right: 4px; }
.dtab.second { margin-right: 0; }
.dtab.on { background: #ccc; margin-left: 1px; letter-spacing: .3px; padding-right: 4px; }
.tabx { font-weight: 400; font-size: 7px; margin-left: 8px; }
.tabnav { position: absolute; right: 5px; top: 5px; display: flex; gap: 8px; }
.tl, .tr { width: 0; height: 0; border: 3px solid transparent; }
.tl { border-right: 3px solid #666; border-left: 0; }
.tr { border-left: 3px solid #666; border-right: 0; }
.cbody { flex: 1; min-height: 0; display: flex; padding-left: 1px; background: #888; }
.canvas { position: relative; width: 511px; background: #fff; overflow: hidden; }
.dtitle { position: absolute; left: 10.5px; top: 13px; margin: 0; font-size: 25.2px; font-weight: 400; color: #111; line-height: 30px; white-space: nowrap; }
.wires { position: absolute; left: 0; top: 0; }
.ent { position: absolute; border: 1px solid #222; border-radius: 2px; background: linear-gradient(90deg, #fff 15%, #f9e8dc); box-shadow: 2px 2px 2px rgba(0,0,0,.28); }
.ent h3 { margin: 0; height: 20px; line-height: 21px; font-size: 7.7px; font-weight: 700; text-align: center; color: #111; border-bottom: 1px solid #777; }
.ent ul { list-style: none; margin: 0; padding: 3px 0 0 18.5px; }
.ent li { position: relative; height: 10.3px; line-height: 10.3px; font-size: 7.6px; color: #444; white-space: nowrap; }
.ent li::before { content: "+"; position: absolute; left: -13.5px; color: #555; }
.ent li.minus::before { content: "-"; }
.n-book { left: 188px; top: 89px; width: 120px; height: 98px; }
.n-trans { left: 367px; top: 89px; width: 119px; height: 59px; }
.n-line { left: 14px; top: 290px; width: 119px; height: 90px; }
.n-acct { left: 367px; top: 290px; width: 119px; height: 100px; }
.n-stock { left: 14px; top: 423px; width: 119px; height: 99px; }
.n-basket { left: 188px; top: 428px; width: 129px; height: 97px; }
.note { position: absolute; left: 14px; top: 89px; width: 115px; height: 120px; border: 1px solid #222; border-radius: 2px; background: #fdfde0; box-shadow: 1px 1px 2px rgba(0,0,0,.25); padding: 12px 2px 0 2.5px; }
.note p { margin: 0; font-size: 7.05px; line-height: 8.2px; color: #8a8a80; white-space: nowrap; }
.pinball { position: absolute; left: 50px; top: -5px; width: 14px; height: 14px; border-radius: 50%; border: 1px solid #666; background: radial-gradient(circle at 40% 30%, #fff, #c4c4c4 70%); }
.pinball.small { width: 6px; height: 6px; left: 49px; top: -2px; }
.notelink { position: absolute; left: 5px; bottom: 10px; display: flex; align-items: center; gap: 6px; }
.notelink .ti { margin: 0; }
.notelink a { color: #2222cc; text-decoration: underline; font-size: 7.6px; }

.vscroll { width: 11px; flex: none; background: #6f6f6f; display: flex; flex-direction: column; position: relative; }
.vscroll .thumb { display: block; background: #999; }
.vscroll i { height: 11px; flex: none; background: #a6a6a6; position: relative; display: block; }
.vscroll i::after { content: ""; position: absolute; left: 2px; top: 4px; border: 3px solid transparent; }
.up::after { border-bottom: 3px solid #222 !important; border-top: 0 !important; }
.down::after { border-top: 3px solid #222 !important; border-bottom: 0 !important; }
.vscroll .down { margin-top: auto; }
.vs-c .thumb { height: 344px; }
.vs-l .thumb { height: 121px; }
.hscroll { height: 11px; flex: none; display: flex; background: #6f6f6f; }
.hscroll i { width: 11px; flex: none; background: #9f9f9f; position: relative; display: block; }
.hscroll i::after { content: ""; position: absolute; top: 2.5px; left: 4px; border: 3px solid transparent; }
.lf::after { border-right: 3px solid #222 !important; border-left: 0 !important; }
.rg-a::after { border-left: 3px solid #222 !important; border-right: 0 !important; }
.hthumb { display: block; background: #999; }
.hs-c { margin-right: 4px; }
.hs-c .hthumb { width: 380px; }
.hs-c .rg-a { margin-left: auto; margin-right: 9px; }

.rightcol { width: 509px; flex: none; display: flex; flex-direction: column; background: #a9a9a9; padding-left: 1px; }
.dbb { height: 302px; flex: none; display: flex; flex-direction: column; }
.dbbody { flex: 1; min-height: 0; display: flex; }
.dbtree { width: 208px; flex: none; padding-top: 0; }
.d0 { padding-left: 0; } .d1 { padding-left: 13px; } .d2 { padding-left: 25px; } .d3 { padding-left: 38px; }
.dbtree .ar { margin-right: 3px; }
.grip { width: 5px; flex: none; }
.dbright { flex: 1; display: flex; flex-direction: column; min-width: 0; padding-right: 1px; }
.dbtabs { height: 14px; flex: none; display: flex; align-items: flex-end; position: relative; }
.dbt { line-height: 12px; color: #3a3a3a; white-space: nowrap; }
.t1 { margin-left: 3px; width: 34px; } .t2 { width: 67px; } .t3 { margin-left: 6px; width: 65px; } .t4 { width: 69px; } .t5 { width: 46px; }
.dbt.on { background: #d3d3d3; border: 1px solid #666; border-bottom: 0; text-align: center; height: 13px; }
.dbdark { flex: 1; min-height: 0; background: #686868; border: 1px solid #ddd; border-right-color: #bbb; padding: 7px 7px 5px 6px; display: flex; flex-direction: column; margin-bottom: 1px; }
.cgrid { height: 68px; flex: none; display: flex; background: #cfcfcf; }
.cmain { flex: 1; min-width: 0; }
.cr { display: grid; grid-template-columns: 101px 34px 36px 97px; height: 13.25px; line-height: 13.25px; background: #dcdcdc; white-space: nowrap; overflow: hidden; font-size: 6.8px; }
.cr span { padding-left: 2px; overflow: hidden; color: #3a3a3a; }
.cr.head { height: 14px; line-height: 14px; background: #9a9a9a; margin-bottom: 1px; font-size: 7.2px; }
.cr.head span { padding-left: 4px; border-right: 1px solid #aaa; }
.cr.sel span { background: #8f8f8f; border-right: 1px solid #ddd; }
.cr.sel span:first-child { background: #dcdcdc; }
.vs-g { width: 11px; background: #7a7a7a; }
.vs-g .thumb { height: 35px; }
.vs-g i { height: 11px; }
.clower { flex: 1; min-height: 0; display: flex; justify-content: space-between; margin-top: 12px; }
.props { width: 186px; background: #d3d3d3; display: flex; flex-direction: column; }
.phead { height: 11px; line-height: 11px; background: #a9a9a9; color: #3f5a7a; letter-spacing: .35px; padding-left: 6px; white-space: nowrap; overflow: hidden; }
.mini { display: inline-block; border: 2px solid transparent; border-right: 2px solid #333; border-bottom: 2px solid #333; margin-right: 5px; }
.prow { height: 11.5px; line-height: 11px; display: grid; grid-template-columns: 94px 92px; background: #ddd; border-bottom: 1px solid #c0c0c0; }
.prow span:first-child { padding-left: 12px; border-right: 1px solid #aaa; background: linear-gradient(90deg, #a9a9a9 11px, #d8d8d8 11px); }
.prow span + span { padding-left: 3px; position: relative; }
.prow.on span:first-child { background: #8f8f8f; }
.prow .caret { position: absolute; right: 4px; top: 5px; }
.pfill { flex: 1; display: grid; grid-template-columns: 94px 92px; }
.pfill span:first-child { border-right: 1px solid #aaa; }
.inv { width: 87px; display: flex; flex-direction: column; margin-right: -1px; }
.invtabs { height: 13px; flex: none; display: flex; }
.invtabs span { line-height: 12px; background: #a9a9a9; padding: 0 3px; width: 29px; }
.invtabs .on { width: 58px; background: #d3d3d3; border: 1px solid #444; border-bottom: 0; white-space: nowrap; padding: 0 0 0 3px; }
.invbox { flex: 1; border: 1px solid #eee; background: #686868; display: flex; padding: 2px; }
.invcol { background: #d3d3d3; min-width: 0; }
.invcol h4 { margin: 0; height: 14px; line-height: 14px; background: #9a9a9a; font-weight: 400; padding-left: 4px; white-space: nowrap; }
.invcol p { margin: 0; height: 13.300px; line-height: 13.300px; padding-left: 3px; white-space: nowrap; }
.c-a { width: 44px; padding-top: 0; } .c-a p { margin-top: 1px; padding-left: 3px; }
.c-b { flex: 1; margin-left: 0; } .c-b p:first-of-type { margin-top: 1px; }
.invgrip { width: 5px; background: #686868; }

.hsplit { height: 4px; flex: none; background: #7e7e7e; }
.cdm { flex: 1; min-height: 0; display: flex; flex-direction: column; }
.cdm .ptitle { height: 23px; padding: 0 4px 1px 2px; }
.cdmcrumb { height: 14px; flex: none; background: #979797; display: flex; align-items: center; padding-left: 12px; color: #808080; }
.cdmcrumb .ti { margin-right: 0; }
.cbody2 { height: 241px; flex: none; display: flex; margin-top: 0; }
.canvas2 { position: relative; width: 498px; background: #fff; overflow: hidden; }
.c2title { position: absolute; left: 9px; top: 0; margin: 0; font: italic 400 13px/15px "Liberation Sans", sans-serif; color: #111; }
.hbox { position: absolute; background: #fdf9f6; border: 1px solid #777; border-radius: 3px 40px 2px 30px / 20px 1px 30px 1px; box-shadow: .5px .5px 0 #bbb; font: italic 700 7.5px/10px "Open Sans", sans-serif; color: #111; white-space: nowrap; padding-top: 1px; }
.b-cust { left: 79px; top: 45px; width: 84px; height: 26px; text-align: center; }
.b-addr { left: 11px; top: 118px; width: 92px; height: 25px; padding-left: 6px; }
.b-ord { left: 187px; top: 121px; width: 84px; height: 25px; text-align: center; }
.b-stat { left: 33px; top: 206px; width: 108px; height: 26px; padding-left: 4px; }
.b-items { left: 261px; top: 212px; width: 104px; height: 26px; text-align: center; }
.b-sup { left: 285px; top: 42px; width: 71px; height: 25px; text-align: center; }
.b-prod { left: 362px; top: 118px; width: 65px; height: 25px; text-align: center; }
.hnote { position: absolute; left: 379px; top: 2px; width: 109px; height: 91px; background: #fff; border: 1px solid #555; border-radius: 2px 40px 1px 30px / 20px 1px 30px 1px; padding: 5px 0 0 2px; font: italic 400 5.100px/6.500px "Open Sans", sans-serif; color: #111; white-space: nowrap; }
.hnote p { margin: 0 0 5.500px; }
.cbody2 .vscroll { width: 11px; }
.hs-l { width: 509px; background: #999; }
.hs-l .hthumb { flex: 1; }
.hs-l .rg-a { margin-right: 11px; background: #888; }
.cdmtabs { padding-left: 2px; border-top: 1px solid #555; }
.cdmtabs .btab { padding-right: 3px; }
.cdmtabs .btab.on { margin-left: 5px; padding: 0 4px 0 2px; }
.rstrip { flex: 1; background: #a9a9a9; position: relative; min-width: 0; }
.starttab { position: absolute; left: 3px; top: 6px; writing-mode: vertical-rl; color: #333; }
.rstrip::after { content: ""; position: absolute; right: 1px; top: 6px; width: 3px; height: 16px; background: #999; }

/* status */
.status { flex: none; height: 16px; background: #505050; display: flex; align-items: center; color: #7a7a7a; padding-left: 1058px; position: relative; }
.slider { width: 63px; height: 1px; background: #777; margin: 0 3px; position: relative; }
.slider b { position: absolute; left: 6px; top: -4px; width: 2px; height: 9px; background: #333; }
.st { display: block; }
.s1 { margin-left: 13px; } .s2 { margin-left: 12px; } .s3 { margin-left: 12px; } .s4 { margin-left: 14px; }
```
